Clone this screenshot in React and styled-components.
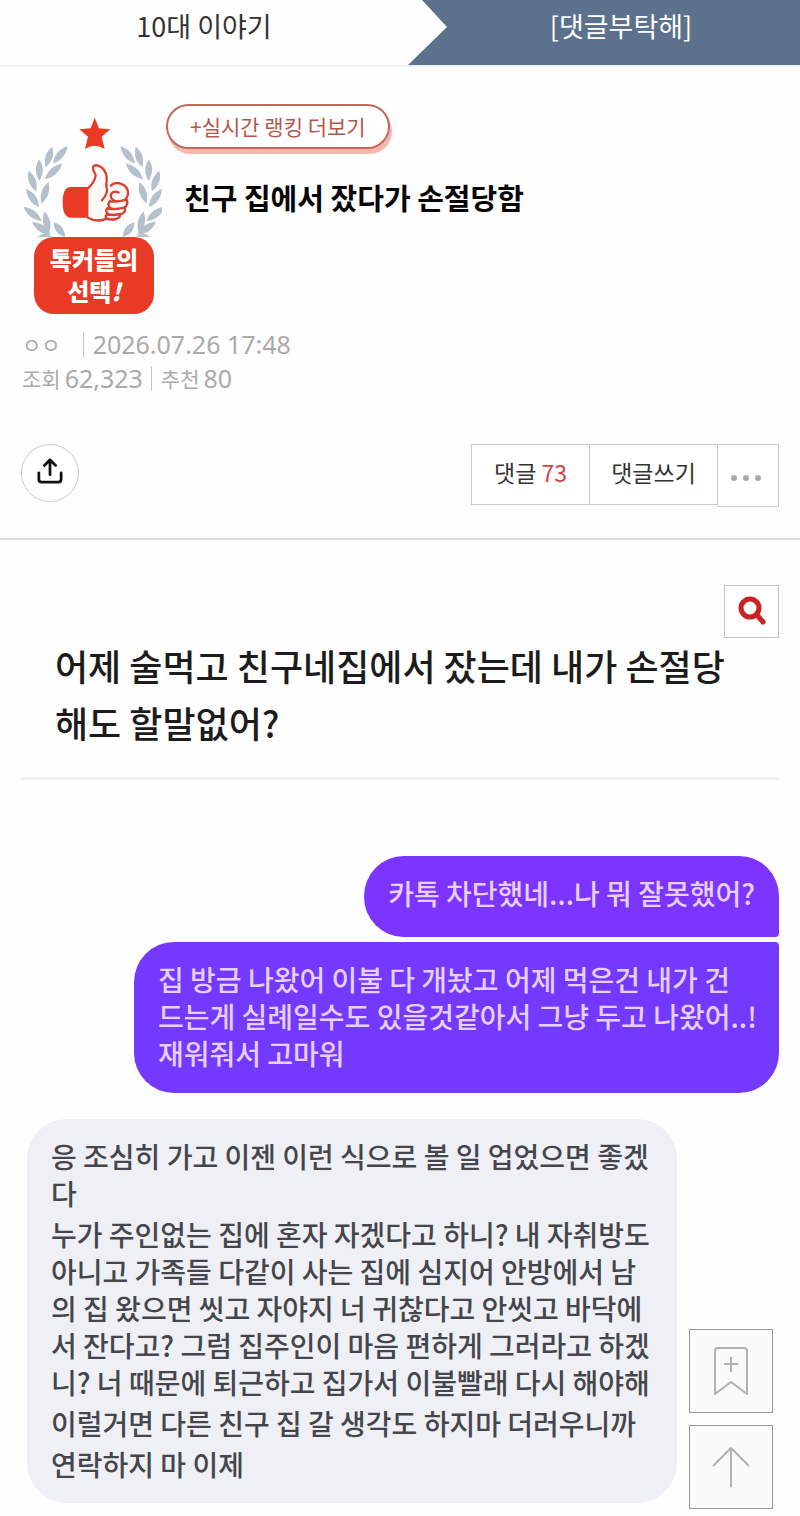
import React from "react";
import styled, { createGlobalStyle } from "styled-components";

const Global = createGlobalStyle`
  * { box-sizing: border-box; }
  body {
    margin: 0;
    background: #fefefe;
    color: #222;
    font-family: "Noto Sans CJK KR", "Noto Sans", sans-serif;
  }
  button { font-family: inherit; padding: 0; cursor: pointer; }
  a { text-decoration: none; color: inherit; }
  h1, h2, p { margin: 0; }
`;

const TabBar = styled.nav`
  display: flex;
  height: 67px;
  border-bottom: 2px solid #f0f1f1;
`;

const Tab = styled.a`
  width: ${(p) => (p.$active ? "49%" : "51%")};
  padding-left: ${(p) => (p.$active ? "34px" : "0")};
  font-size: 27px;
  line-height: 52px;
  text-align: center;
  color: ${(p) => (p.$active ? "#fff" : "#333")};
  background: ${(p) => (p.$active ? "#5b718c" : "transparent")};
  clip-path: ${(p) =>
    p.$active ? "polygon(14px 0, 100% 0, 100% 100%, 0 100%, 39px 27px)" : "none"};
`;

const PostHeader = styled.header`
  display: flex;
  padding: 37px 22px 0;
`;

const Badge = styled.div`
  display: flex;
  flex-direction: column;
  align-items: center;
  width: 144px;
  padding-top: 11px;
  svg { display: block; align-self: flex-start; }
`;

const BadgeLabel = styled.div`
  width: 120px;
  padding: 6px 0 7px;
  border-radius: 20px;
  background: #e83a24;
  color: #fff;
  font-size: 24px;
  font-weight: 900;
  line-height: 32px;
  text-align: center;
  white-space: nowrap;
`;

const TitleColumn = styled.div`
  display: flex;
  flex-direction: column;
  align-items: flex-start;
  gap: 28px;
`;

const RankingLink = styled.a`
  padding: 0 22px;
  border: 2px solid #c06a5e;
  border-radius: 23px;
  background: #fff;
  box-shadow: 2px 5px 0 #f6b5ad;
  color: #b4564b;
  font-size: 21px;
  line-height: 41px;
`;

const Title = styled.h1`
  padding-left: 18px;
  color: #050505;
  font-size: 29px;
  line-height: 40px;
`;

const Meta = styled.div`
  display: flex;
  flex-direction: column;
  padding: 13px 22px 0;
`;

const MetaRow = styled.div`
  display: flex;
  align-items: center;
  height: 34px;
  color: #aaa;
  font-size: 21px;
`;

const MetaValue = styled.span`
  padding-left: ${(p) => (p.$lead ? "9px" : "4px")};
  font-family: "Noto Sans", "Noto Sans CJK KR", sans-serif;
  font-size: 25px;
  line-height: 30px;
`;

const Separator = styled.span`
  width: 1px;
  height: 25px;
  margin-left: ${(p) => (p.$wide ? "22px" : "8px")};
  margin-right: ${(p) => (p.$wide ? "0" : "9px")};
  background: #c4c4c4;
`;

const Actions = styled.div`
  display: flex;
  justify-content: space-between;
  align-items: flex-start;
  padding: 49px 21px 31px;
  border-bottom: 2px solid #dcdcdc;
`;

const ShareButton = styled.button`
  display: grid;
  place-items: center;
  width: 58px;
  height: 58px;
  padding-bottom: 4px;
  border: 1px solid #ccc;
  border-radius: 50%;
  background: #fff;
`;

const ButtonGroup = styled.div`
  display: flex;
  align-items: flex-start;
`;

const ActionButton = styled.button`
  display: flex;
  justify-content: center;
  align-items: center;
  width: ${(p) => p.$width}px;
  height: ${(p) => (p.$tall ? "63px" : "61px")};
  margin-left: -1px;
  padding: ${(p) => (p.$tall ? "5px 4px 0 0" : "0 0 5px")};
  border: 1px solid #ccc;
  background: #fff;
  color: #333;
  font-size: 23px;
  white-space: pre;
  em { font-style: normal; color: #cf4444; }
`;

const Content = styled.main`
  padding: 45px 21px 0;
`;

const SearchButton = styled.button`
  display: grid;
  place-items: center;
  width: 55px;
  height: 53px;
  margin-left: auto;
  padding-bottom: 3px;
  border: 1px solid #bfc3c5;
  background: #fff;
`;

const Question = styled.h2`
  padding: 0 20px 26px 34px;
  border-bottom: 3px solid #f0f0f0;
  color: #1c1c1c;
  font-size: 36px;
  font-weight: 500;
  line-height: 57px;
  margin-top: -1px;
`;

const Chat = styled.section`
  display: flex;
  flex-direction: column;
  padding-top: 76px;
  font-weight: 500;
`;

const Sent = styled.div`
  align-self: flex-end;
  max-width: 645px;
  margin-bottom: 5px;
  padding: ${(p) => (p.$first ? "19px 24px 25px" : "19px 24px 21px")};
  border-radius: ${(p) => (p.$first ? "40px 40px 4px 40px" : "40px 4px 40px 40px")};
  background: ${(p) => (p.$first ? "#7c34ff" : "#7439ff")};
  color: #e6d0ff;
  font-size: 28px;
  line-height: 37px;
  white-space: nowrap;
`;

const Received = styled.div`
  display: flex;
  flex-direction: column;
  gap: 4px;
  align-self: flex-start;
  margin: 21px 0 12px 6px;
  padding: 19px 24px 20px;
  width: 650px;
  border-radius: 40px;
  background: #eff0f5;
  color: #45464c;
  font-size: 28px;
  line-height: 37px;
  white-space: nowrap;
`;

const FloatingTools = styled.div`
  position: fixed;
  right: 27px;
  bottom: 7px;
  display: flex;
  flex-direction: column;
  gap: 12px;
`;

const FloatingButton = styled.button`
  display: grid;
  place-items: center;
  width: 84px;
  height: 84px;
  border: 1px solid #999;
  background: #fafafa;
`;

const Leaf = ({ x, y, r, l = 32 }) => (
  <path
    d={`M0 ${-l} C14 ${-l / 3} 14 ${l / 3} 0 ${l} C-14 ${l / 3} -14 ${-l / 3} 0 ${-l}Z`}
    transform={`translate(${x} ${y}) rotate(${r})`}
  />
);

const Laurel = () => (
  <>
    <Leaf x={151} y={149} r={40} l={34} />
    <Leaf x={131} y={199} r={48} l={35} />
    <Leaf x={117} y={156} r={18} />
    <Leaf x={88} y={195} r={-1} />
    <Leaf x={105} y={263} r={18} l={34} />
    <Leaf x={67} y={228} r={-20} l={33} />
    <Leaf x={68} y={279} r={-35} l={34} />
    <Leaf x={110} y={352} r={-12} l={33} />
    <Leaf x={68} y={327} r={-52} l={34} />
    <Leaf x={94} y={370} r={-56} l={34} />
    <Leaf x={148} y={374} r={-38} l={28} />
    <Leaf x={104} y={397} r={-92} l={22} />
  </>
);

const Emblem = () => (
  <svg width="140" height="122" viewBox="36 30 420 366" aria-hidden="true">
    <g fill="#b4c0cb">
      <Laurel />
      <g transform="translate(504 0) scale(-1 1)">
        <Laurel />
      </g>
    </g>
    <path
      fill="#e83a24"
      d="M254 38 L267 70 L301 73 L275 95 L284 132 Q254 112 225 132 L234 95 L208 73 L242 70Z"
    />
    <path fill="#e83a24" d="M236 246 H180 Q158 248 158 292 Q158 336 180 338 H236Z" />
    <g fill="#fffaf7" stroke="#dc4030" strokeWidth="7" strokeLinejoin="round" strokeLinecap="round">
      <path
        stroke="none"
        d="M236 250 Q254 228 257 208 L250 192 Q252 180 266 182 Q290 190 290 215 L288 246 L306 250 L346 300 L318 338 L290 336 Q262 354 236 338Z"
      />
      <path fill="none" d="M236 248 Q256 228 257 210 Q246 190 250 184 Q260 176 276 188 Q292 204 290 226 Q288 240 290 248 Q296 262 276 286" />
      <path fill="none" d="M234 338 Q262 354 292 340" />
      <path d="M302 242 Q314 230 332 236 Q356 244 354 268 Q350 290 326 291 Q304 288 302 272 Q304 256 326 262" />
      <path d="M300 288 Q308 294 350 284 Q356 298 344 308 Q322 316 302 310 Q290 300 300 288" />
      <path d="M292 310 Q302 316 344 308 Q348 322 336 326 Q314 332 296 328 Q284 320 292 310" />
      <path d="M290 328 Q302 332 330 328 Q332 338 318 342 Q302 346 290 340 Q284 334 290 328" />
    </g>
  </svg>
);

export default function App() {
  return (
    <>
      <Global />
      <TabBar>
        <Tab href="#teens">10대 이야기</Tab>
        <Tab href="#reply" $active>[댓글부탁해]</Tab>
      </TabBar>

      <PostHeader>
        <Badge>
          <Emblem />
          <BadgeLabel>톡커들의<br />선택<i>!</i></BadgeLabel>
        </Badge>
        <TitleColumn>
          <RankingLink href="#ranking">+실시간 랭킹 더보기</RankingLink>
          <Title>친구 집에서 잤다가 손절당함</Title>
        </TitleColumn>
      </PostHeader>

      <Meta>
        <MetaRow>
          <span>ㅇㅇ</span>
          <Separator $wide />
          <MetaValue $lead>2026.07.26 17:48</MetaValue>
        </MetaRow>
        <MetaRow>
          <span>조회</span>
          <MetaValue>62,323</MetaValue>
          <Separator />
          <span>추천</span>
          <MetaValue>80</MetaValue>
        </MetaRow>
      </Meta>

      <Actions>
        <ShareButton aria-label="공유">
          <svg width="26" height="26" viewBox="0 0 28 28" fill="none" stroke="#111" strokeWidth="3" strokeLinecap="round" strokeLinejoin="round">
            <path d="M14 18V3M8 8l6-6 6 6M2 16v7q0 3 3 3h18q3 0 3-3v-7" />
          </svg>
        </ShareButton>
        <ButtonGroup>
          <ActionButton $width={119}>댓글 <em>73</em></ActionButton>
          <ActionButton $width={129}>댓글쓰기</ActionButton>
          <ActionButton $width={62} $tall aria-label="더보기">
            <svg width="32" height="8" viewBox="0 0 32 8" fill="#aaa">
              <circle cx="4" cy="4" r="3" />
              <circle cx="16" cy="4" r="3" />
              <circle cx="28" cy="4" r="3" />
            </svg>
          </ActionButton>
        </ButtonGroup>
      </Actions>

      <Content>
        <SearchButton aria-label="검색">
          <svg width="30" height="30" viewBox="0 0 30 30" fill="none" stroke="#cc2222" strokeLinecap="round">
            <circle cx="13" cy="13" r="9" strokeWidth="5" />
            <path d="M20 20l6 7" strokeWidth="5" />
          </svg>
        </SearchButton>
        <Question>
          어제 술먹고 친구네집에서 잤는데 내가 손절당
          <br />
          해도 할말없어?
        </Question>
        <Chat>
          <Sent $first>카톡 차단했네...나 뭐 잘못했어?</Sent>
          <Sent>
            집 방금 나왔어 이불 다 개놨고 어제 먹은건 내가 건
            <br />
            드는게 실례일수도 있을것같아서 그냥 두고 나왔어..!
            <br />
            재워줘서 고마워
          </Sent>
          <Received>
            <p>
              응 조심히 가고 이젠 이런 식으로 볼 일 업었으면 좋겠
              <br />다
            </p>
            <p>
              누가 주인없는 집에 혼자 자겠다고 하니? 내 자취방도
              <br />
              아니고 가족들 다같이 사는 집에 심지어 안방에서 남
              <br />
              의 집 왔으면 씻고 자야지 너 귀찮다고 안씻고 바닥에
              <br />
              서 잔다고? 그럼 집주인이 마음 편하게 그러라고 하겠
              <br />
              니? 너 때문에 퇴근하고 집가서 이불빨래 다시 해야해
            </p>
            <p>이럴거면 다른 친구 집 갈 생각도 하지마 더러우니까</p>
            <p>연락하지 마 이제</p>
          </Received>
        </Chat>
      </Content>

      <FloatingTools>
        <FloatingButton aria-label="북마크 추가">
          <svg width="34" height="48" viewBox="0 0 34 48" fill="none" stroke="#b2b2b2" strokeWidth="2" strokeLinejoin="round">
            <path d="M1 47V4q0-3 3-3h26q3 0 3 3v43L17 35zM17 10v15M10 17h14" />
          </svg>
        </FloatingButton>
        <FloatingButton aria-label="맨 위로">
          <svg width="38" height="42" viewBox="0 0 38 42" fill="none" stroke="#b2b2b2" strokeWidth="2">
            <path d="M19 41V2M1 20L19 2l18 18" />
          </svg>
        </FloatingButton>
      </FloatingTools>
    </>
  );
}
